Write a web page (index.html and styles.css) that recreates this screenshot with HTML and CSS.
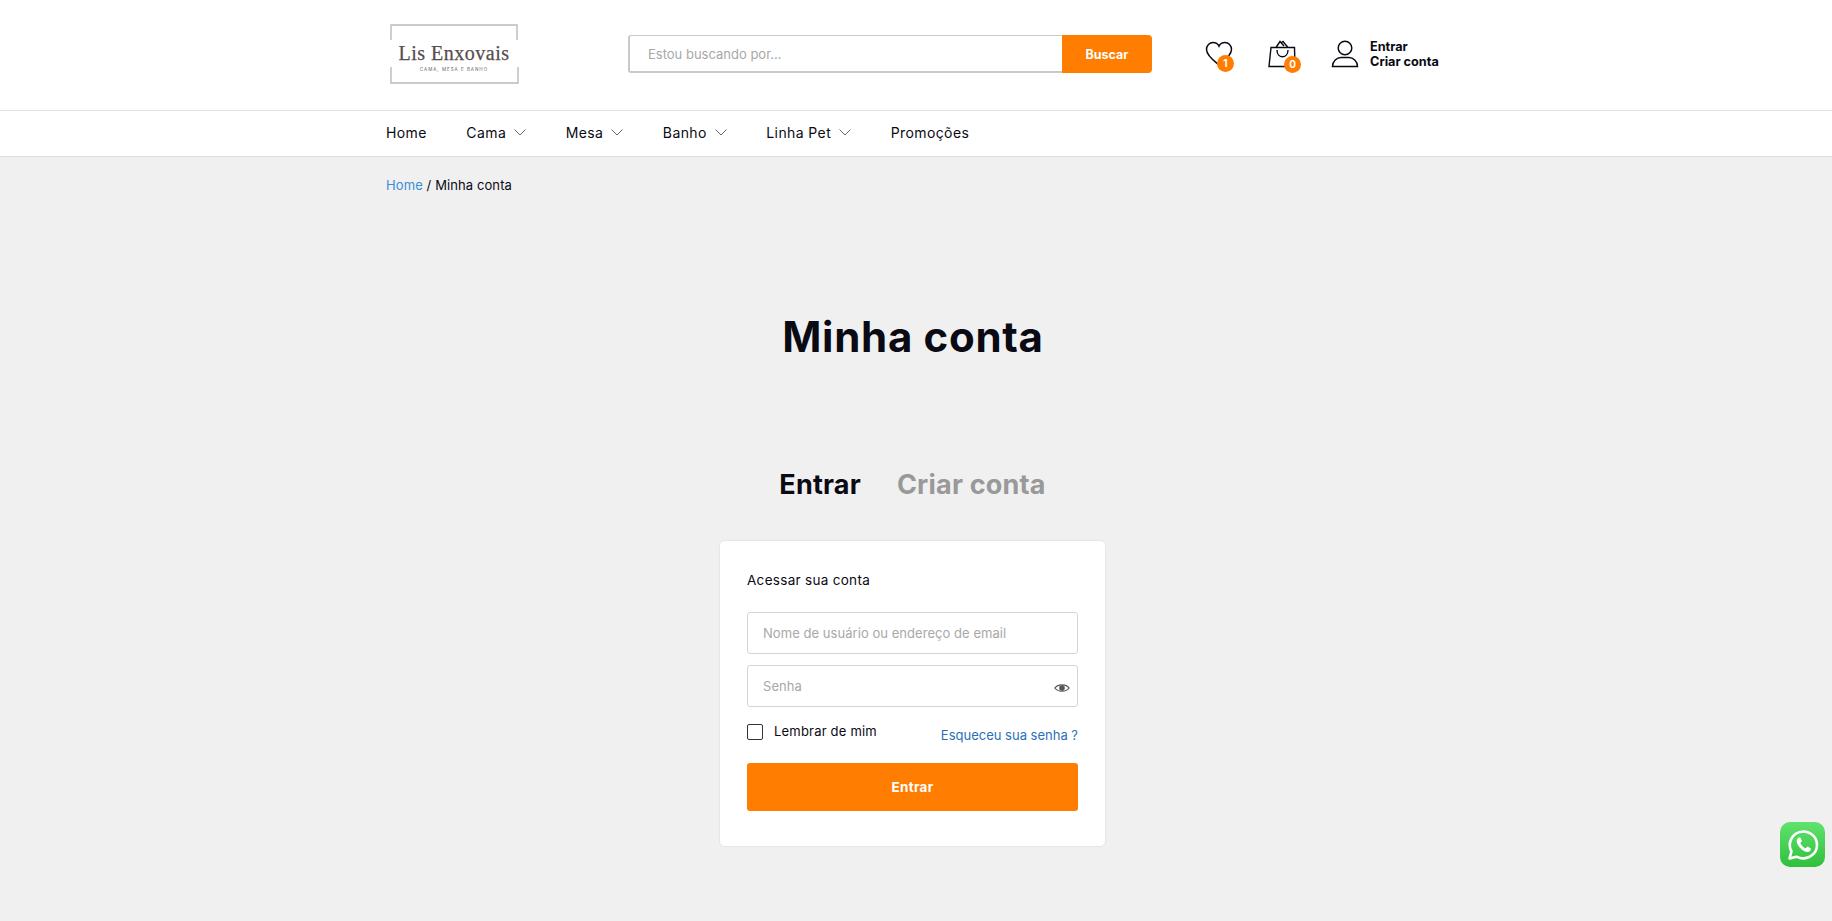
FILE: index.html
```html
<!DOCTYPE html>
<html lang="pt-BR">
<head>
  <meta charset="UTF-8">
  <meta name="viewport" content="width=device-width, initial-scale=1.0">
  <title>Minha conta - Lis Enxovais</title>
  <link rel="stylesheet" href="styles.css">
</head>
<body>
  <header class="top-bar">
    <div class="container top-inner">
      <a href="#" class="logo">
        <svg width="130" height="60" viewBox="0 0 130 60">
          <path d="M1 16V1H127V16M1 43V59H128V43" fill="none" stroke="#bdb9b9" stroke-width="1.4"/>
          <text x="64" y="36" text-anchor="middle" class="logo-name">Lis Enxovais</text>
          <text x="64" y="47" text-anchor="middle" class="logo-sub">CAMA, MESA E BANHO</text>
        </svg>
      </a>
      <form class="search">
        <input type="text" placeholder="Estou buscando por...">
        <button type="button">Buscar</button>
      </form>
      <div class="top-icons">
        <a href="#" class="icon-link heart-link">
          <svg width="28" height="26" viewBox="0 0 28 26"><path d="M14 24C9 20 1.500 14.500 1.500 8.500C1.500 4.500 4.500 1.500 8 1.500C10.500 1.500 12.800 2.800 14 5.200C15.200 2.800 17.500 1.500 20 1.500C23.500 1.500 26.500 4.500 26.500 8.500C26.500 14.500 19 20 14 24Z" fill="none" stroke="#0a0a14" stroke-width="1.500"/></svg>
          <span class="badge">1</span>
        </a>
        <a href="#" class="icon-link bag-link">
          <svg width="28" height="28" viewBox="0 0 28 28"><path d="M3 7.500H26.500L27 26.500H1ZM8 7.500L12 1.500L16 6M13 3L15 1.500L20 7.500M9 10C9 19 20 19 20 10" fill="none" stroke="#0a0a14" stroke-width="1.400"/></svg>
          <span class="badge">0</span>
        </a>
        <a href="#" class="account-link">
          <svg width="28" height="28" viewBox="0 0 28 28"><circle cx="14" cy="8" r="6.800" fill="none" stroke="#0a0a14" stroke-width="1.500"/><path d="M1.500 26.500C1.500 21 6 17.500 10 17.500H18C22 17.500 26.500 21 26.500 26.500Z" fill="none" stroke="#0a0a14" stroke-width="1.500"/></svg>
          <span class="account-text">Entrar<br>Criar conta</span>
        </a>
      </div>
    </div>
  </header>

  <nav class="main-nav">
    <ul class="container">
      <li><a href="#">Home</a></li>
      <li><a href="#">Cama<svg class="chev" width="12" height="7" viewBox="0 0 12 7"><path d="M.5.5L6 6L11.500.5"/></svg></a></li>
      <li><a href="#">Mesa<svg class="chev" width="12" height="7" viewBox="0 0 12 7"><path d="M.5.5L6 6L11.500.5"/></svg></a></li>
      <li><a href="#">Banho<svg class="chev" width="12" height="7" viewBox="0 0 12 7"><path d="M.5.5L6 6L11.500.5"/></svg></a></li>
      <li><a href="#">Linha Pet<svg class="chev" width="12" height="7" viewBox="0 0 12 7"><path d="M.5.5L6 6L11.500.5"/></svg></a></li>
      <li><a href="#">Promoções</a></li>
    </ul>
  </nav>

  <main class="container">
    <div class="breadcrumb"><a href="#">Home</a> / Minha conta</div>
    <h1 class="page-title">Minha conta</h1>
    <div class="tabs">
      <a href="#" class="tab active">Entrar</a>
      <a href="#" class="tab">Criar conta</a>
    </div>
    <form class="login-card">
      <p class="login-title">Acessar sua conta</p>
      <input class="field" type="text" placeholder="Nome de usuário ou endereço de email">
      <div class="password-wrap">
        <input class="field" type="password" placeholder="Senha">
        <svg class="eye" width="16" height="10" viewBox="0 0 16 10"><path d="M.8 5C4 .8 12 .8 15.200 5C12 9.200 4 9.200 .8 5Z" fill="none" stroke="#555" stroke-width="1.200"/><circle cx="8" cy="5" r="2.800" fill="#555"/></svg>
      </div>
      <div class="login-row">
        <label class="remember"><span class="check"></span>Lembrar de mim</label>
        <a href="#" class="forgot">Esqueceu sua senha ?</a>
      </div>
      <button type="button" class="login-button">Entrar</button>
    </form>
  </main>

  <a href="#" class="whatsapp">
    <svg width="34" height="34" viewBox="0 0 34 34">
      <path d="M3.500 30.500L5.500 23.500C1 15.500 6 4 17 3.500C25 3.500 31 9.500 31 17C31 27 20 33.500 10.500 28.700Z" fill="none" stroke="#fff" stroke-width="2.600" stroke-linejoin="round"/>
      <path d="M12.800 9.500C10.500 10.800 10 13.500 12 17C14 20.500 17.500 23.500 21.500 24C23.500 24 25 22.500 25 20.500L21.500 18.500L19.500 20.300C17.500 19.500 15 17 14.300 15L16 13.300L14.300 9.500Z" fill="#fff"/>
    </svg>
  </a>
</body>
</html>
```

FILE: styles.css
```css
/* Basic styling */
* {
  box-sizing: border-box;
}

html, body {
  height: 100%;
  overflow: hidden;
}

body {
  margin: 0;
  font-family: Inter, "Liberation Sans", sans-serif;
  background-color: #f0f0f0;
  color: #0a0a14;
}

a {
  text-decoration: none;
  color: inherit;
}

.container {
  width: 1060px;
  margin-left: 386px;
}

/* top bar */
.top-bar {
  height: 111px;
  background-color: #fff;
  border-bottom: 1px solid #e1e1e1;
}

.top-inner {
  display: flex;
  align-items: center;
  height: 110px;
}

.logo {
  display: flex;
  margin-left: 4px;
  margin-bottom: 2px;
}

.logo-name {
  font-family: "Liberation Serif", serif;
  font-size: 20px;
  fill: #574d4d;
  stroke: #574d4d;
  stroke-width: 0.25px;
  letter-spacing: 0.5px;
}

.logo-sub {
  font-family: Inter, sans-serif;
  font-size: 4.500px;
  fill: #666;
  letter-spacing: 1px;
}

.search {
  display: flex;
  width: 524px;
  height: 38px;
  margin-left: 108px;
  margin-bottom: 2px;
}

.search input {
  flex: 1;
  min-width: 0;
  height: 100%;
  padding: 0 18px;
  border: 1px solid #c9c9c9;
  border-left-width: 2px;
  border-bottom-width: 2px;
  border-right: none;
  border-radius: 3px 0 0 3px;
  font-family: inherit;
  font-size: 13px;
  outline: none;
}

.search input::placeholder {
  color: #a8a8a8;
}

.search button {
  width: 90px;
  height: 100%;
  border: none;
  border-radius: 0 4px 4px 0;
  background-color: #ff7d00;
  color: #fff;
  font-family: inherit;
  font-size: 12.500px;
  font-weight: 700;
}

.top-icons {
  display: flex;
  align-items: center;
  margin-left: 53px;
  margin-bottom: 2px;
}

.icon-link {
  position: relative;
  display: flex;
}

.heart-link {
  width: 36px;
}

.bag-link {
  width: 36px;
  margin-left: 27px;
}

.badge {
  position: absolute;
  bottom: -5px;
  width: 17px;
  height: 17px;
  border-radius: 50%;
  background-color: #ff7d00;
  color: #fff;
  font-size: 10px;
  font-weight: 700;
  line-height: 17px;
  text-align: center;
}

.heart-link .badge {
  right: 7px;
}

.bag-link .badge {
  right: 3px;
}

.account-link {
  display: flex;
  align-items: center;
  gap: 11px;
  margin-left: 27px;
}

.account-text {
  font-size: 12.700px;
  font-weight: 700;
  line-height: 15px;
}

/* menu */
.main-nav {
  height: 46px;
  background-color: #fff;
  border-bottom: 1px solid #dedede;
}

.main-nav ul {
  display: flex;
  align-items: center;
  gap: 39.500px;
  height: 45px;
  padding: 0 0 2px;
  list-style-type: none;
  margin-top: 0;
  margin-bottom: 0;
}

.main-nav a {
  display: flex;
  align-items: center;
  font-size: 14px;
  letter-spacing: 0.4px;
}

.chev {
  margin-left: 8px;
  fill: none;
  stroke: #667;
  stroke-width: 1;
}

/* content */
.breadcrumb {
  margin-top: 19px;
  font-size: 13px;
  letter-spacing: 0.1px;
  line-height: 18px;
}

.breadcrumb a {
  color: #3b8dd8;
}

.page-title {
  width: 1054px;
  margin: 118px 0 0;
  font-size: 42px;
  font-weight: 700;
  letter-spacing: 0.7px;
  line-height: 50px;
  text-align: center;
}

.tabs {
  display: flex;
  justify-content: center;
  gap: 36px;
  width: 1053px;
  margin-top: 107px;
}

.tab {
  font-size: 27px;
  font-weight: 700;
  letter-spacing: 0.2px;
  line-height: 32px;
  color: #999;
}

.tab.active {
  color: #0a0a14;
}

.login-card {
  display: flex;
  flex-direction: column;
  width: 387px;
  height: 307px;
  margin: 39px 0 0 333px;
  padding: 32px 27px 0;
  background-color: #fff;
  border: 1px solid #e6e6e6;
  border-radius: 6px;
}

.login-title {
  margin: 0 0 24px;
  font-size: 13.500px;
  line-height: 15px;
  letter-spacing: 0.3px;
}

.field {
  display: block;
  width: 100%;
  height: 42px;
  padding: 0 15px;
  border: 1px solid #d4d4d4;
  border-radius: 3px;
  font-family: inherit;
  font-size: 13px;
  letter-spacing: 0.05px;
  outline: none;
}

.field::placeholder {
  color: #a8a8a8;
}

.password-wrap {
  position: relative;
  margin-top: 11px;
}

.eye {
  position: absolute;
  right: 8px;
  top: 18px;
}

.login-row {
  display: flex;
  justify-content: space-between;
  align-items: flex-start;
  margin-top: 16px;
}

.remember {
  display: flex;
  align-items: center;
  gap: 11px;
  font-size: 13px;
  letter-spacing: 0.2px;
  line-height: 17px;
}

.check {
  width: 16px;
  height: 16px;
  border: 1px solid #333;
  border-radius: 2px;
}

.forgot {
  margin-top: 4px;
  font-size: 13px;
  line-height: 17px;
  color: #2a70b8;
}

.login-button {
  width: 100%;
  height: 48px;
  margin-top: 19px;
  border: none;
  border-radius: 3px;
  background-color: #ff7d00;
  color: #fff;
  font-family: inherit;
  font-size: 13.500px;
  font-weight: 700;
  letter-spacing: 0.3px;
}

.whatsapp {
  position: fixed;
  left: 1780px;
  top: 822px;
  display: flex;
  align-items: center;
  justify-content: center;
  width: 45px;
  height: 45px;
  border-radius: 10px;
  background: linear-gradient(#61e26f, #2fc03c);
}
```
